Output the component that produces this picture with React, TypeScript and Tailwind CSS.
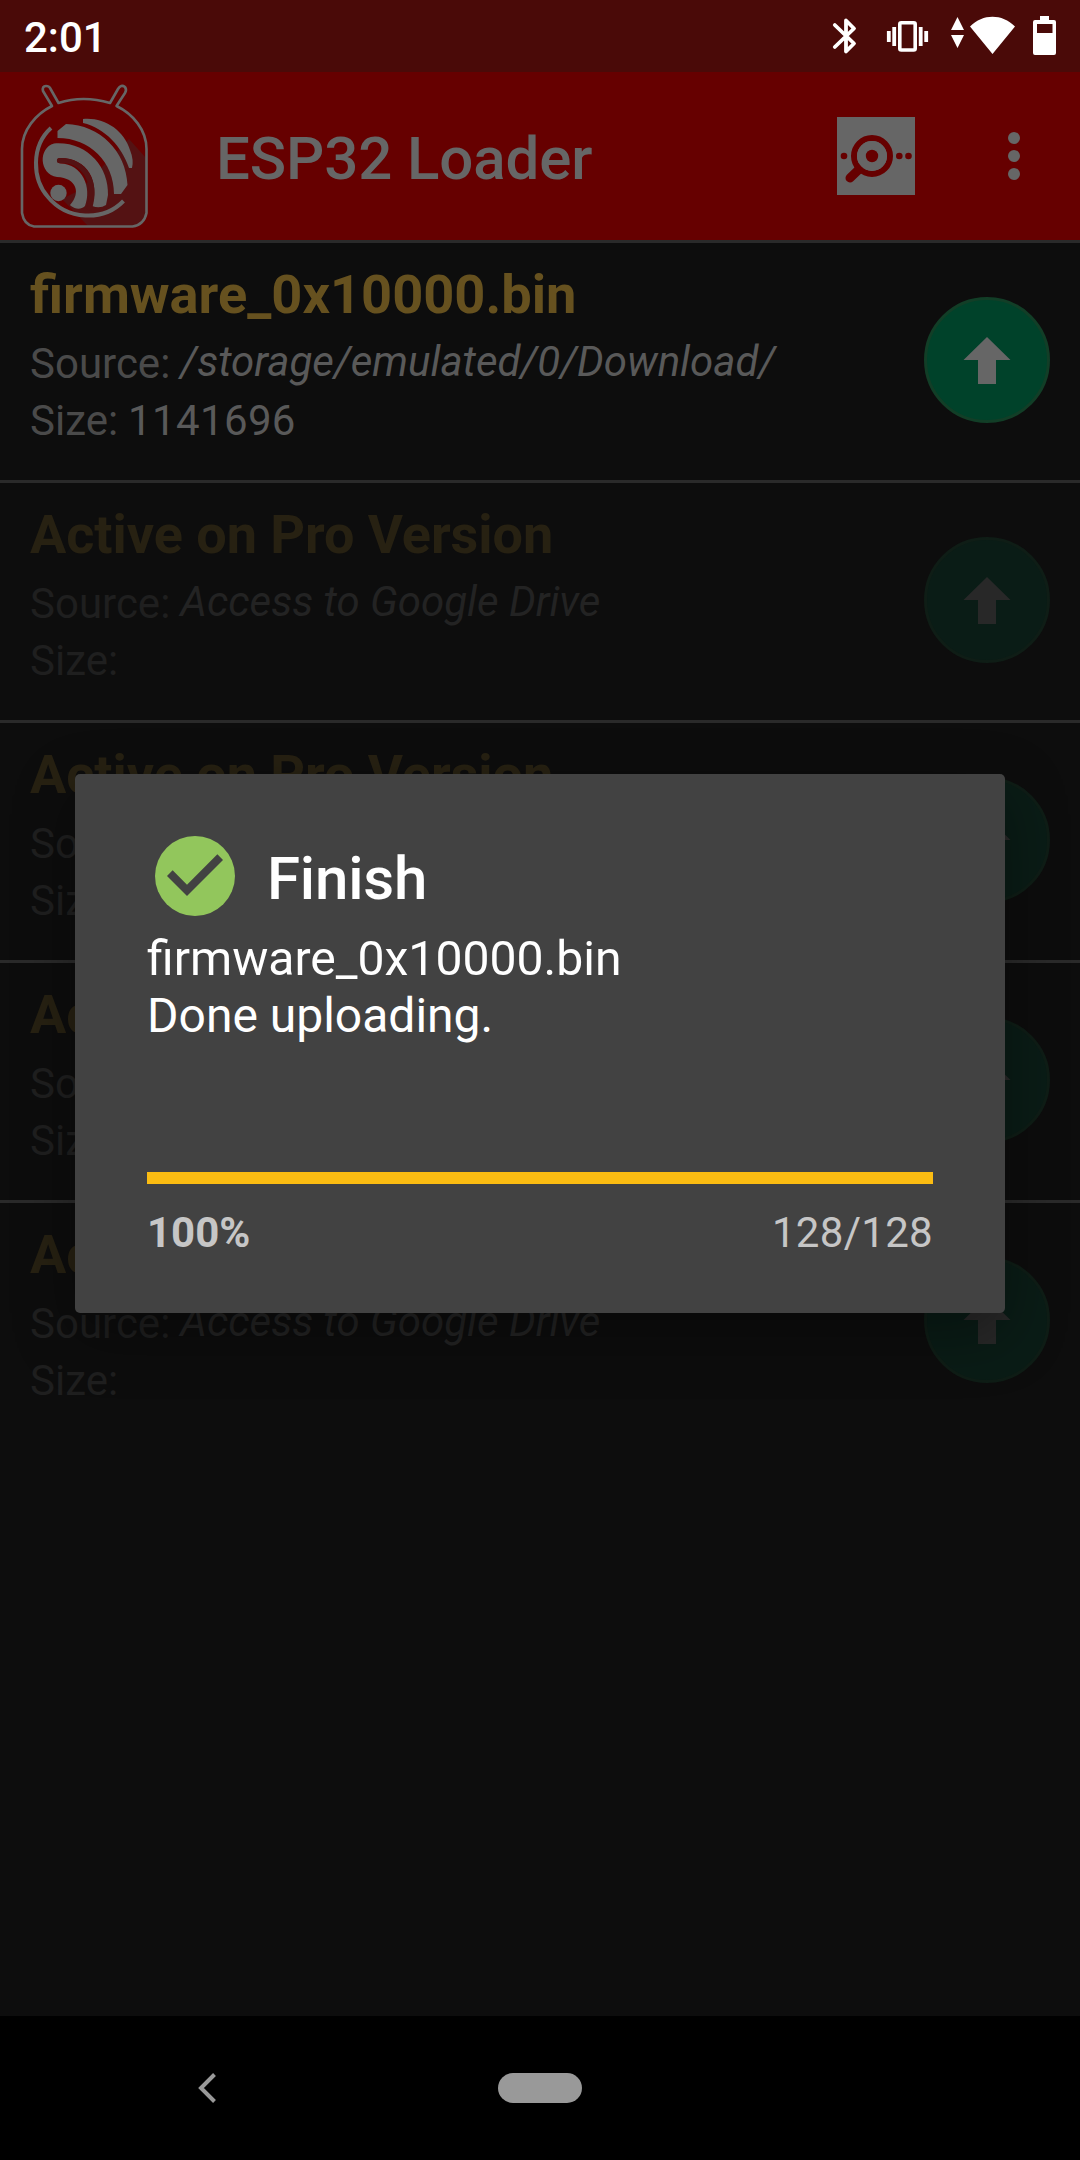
import React from "react";

function Logo() {
  return (
    <svg className="-mt-0.5 ml-4 h-[170px] w-[136px] shrink-0" viewBox="16 70 136 170" fill="none">
      <path d="M129 139 L146 158 V213 Q143 226 131 226 H88 L62 199 L80 190 Z" fill="#541213" />
      <g stroke="#666" strokeWidth="2.6">
        <path d="M58.500 103 Q83 95 110 103 L118 89 Q121 84 125 87 Q127 90 125 93 L116.500 106 C133 114 146.500 130 146.500 149 V213 Q144 225 132.500 226.500 H34 Q24 225 22 213 V149 C22 130 36 114 52 106 L43 91 Q42 86 46 86 Q49 86 50 88 Z" strokeLinejoin="round" />
        <path d="M51 128 C31 146 32 179 48 197 C67 220 103 222 123.500 201" stroke="#666" strokeWidth="4" />
      </g>
      <g fill="#666">
        <path d="M83 119 C104 117 124 130 130 150 Q134 160 132 168 L129 168 C122 147 105 128 83 123 Z" />
        <path d="M57.500 131 L66 124 C100 125 126 151 127.500 185 L121 194 H114 C114 162 90 138 57.500 138 Z" />
        <path d="M70 205 C81 193 77 178 57 177 C39 174 38 148 54 143.500 C87 141 109 167 108 195 L106 205 Q100 209 92 206 C100 182 88 158 60 158 C56 158 56 163 60 163.500 C83 164 92 188 85 206 C81 210 75 209 71 206 Z" />
        <circle cx="58.500" cy="193" r="8.200" />
      </g>
      <path d="M59.500 160.500 C86 160 97 184 89.500 208" stroke="#541213" strokeWidth="5.200" strokeLinecap="round" />
    </svg>
  );
}

function StatusBar() {
  return (
    <div className="flex h-[72px] shrink-0 items-center justify-between bg-[#4a0a08] pl-6 text-white">
      <span className="pt-[3px] text-[42px] font-medium leading-[72px]">2:01</span>
      <svg className="h-[72px] w-[280px]" viewBox="0 0 280 72" fill="none">
        <path d="M34.800 25 L54 43.500 L46 51.500 V20.500 L54 28.500 L34.800 47" stroke="#fff" strokeWidth="3.800" strokeLinecap="round" strokeLinejoin="round" />
        <rect x="99.800" y="22.800" width="15.400" height="27.200" rx="1.500" stroke="#fff" strokeWidth="3.600" />
        <path d="M88.800 31v11M94.200 27v19M120.700 27v19M126.200 31v11" stroke="#fff" strokeWidth="3.800" />
        <path d="M157.500 17l6.500 13h-13zM157.500 48l6.500-13h-13zM170 26.500C183 13.500 202 13.500 215 26.500L192.500 54z" fill="#fff" />
        <path fillRule="evenodd" d="M240 16h9v4h5a2 2 0 0 1 2 2v31a2 2 0 0 1-2 2h-19a2 2 0 0 1-2-2V22a2 2 0 0 1 2-2h5zM237 24v9h15.500v-9z" fill="#fff" />
      </svg>
    </div>
  );
}

function ScanIcon() {
  return (
    <svg className="h-[78px] w-[78px]" viewBox="0 0 78 78">
      <rect width="78" height="78" fill="#666" />
      <circle cx="35" cy="39" r="18" fill="none" stroke="#600" strokeWidth="6" />
      <path d="M25 49.500L13 61" stroke="#600" strokeWidth="9" strokeLinecap="round" />
      <circle cx="35" cy="39" r="15" fill="#666" />
      <g fill="#600">
        <circle cx="35" cy="39" r="6.200" />
        <circle cx="7" cy="39" r="3.300" />
        <circle cx="62.300" cy="39" r="3.300" />
        <circle cx="71.500" cy="39" r="3.300" />
      </g>
    </svg>
  );
}

function Toolbar() {
  return (
    <header className="flex h-[168px] shrink-0 items-center bg-[#660000] text-[#666]">
      <Logo />
      <h1 className="ml-[64px] grow pt-[5px] text-[60px] font-medium leading-[72px] tracking-[-0.1px]">ESP32 Loader</h1>
      <ScanIcon />
      <div className="ml-[93px] mr-[60px] flex flex-col gap-1.5">
        <span className="size-3 rounded-full bg-[#666]" />
        <span className="size-3 rounded-full bg-[#666]" />
        <span className="size-3 rounded-full bg-[#666]" />
      </div>
    </header>
  );
}

type Item = { name: string; source: string; size: string; active: boolean };

const locked: Item = { name: "Active on Pro Version", source: "Access to Google Drive", size: "", active: false };
const items: Item[] = [
  { name: "firmware_0x10000.bin", source: "/storage/emulated/0/Download/", size: "1141696", active: true },
  locked,
  locked,
  locked,
  locked,
];

function Row({ item }: { item: Item }) {
  const a = item.active;
  return (
    <li className="flex h-[240px] items-start justify-between border-t-[3px] border-[#2a2a2a] px-[30px]">
      <div className="pt-5">
        <h2 className={`font-bold leading-[64px] ${a ? "text-[54.2px] text-[#66511f]" : "text-[54px] tracking-[-0.05px] text-[#272112]"}`}>
          {item.name}
        </h2>
        <div className={`mt-2 flex text-[42px] leading-[57px] ${a ? "text-[#4a4a4a]" : "text-[#1f1f1f]"}`}>
          <span>Source:</span>
          <span className={`-mt-0.5 ml-[10px] italic ${a ? "text-[#595959]" : "text-[#232323]"}`}>{item.source}</span>
        </div>
        <div className={`flex text-[42px] leading-[57px] ${a ? "text-[#4a4a4a]" : "text-[#1f1f1f]"}`}>
          <span>Size:</span>
          <span className="ml-[10px] tracking-[0.35px] text-[#595959]">{item.size}</span>
        </div>
      </div>
      <div className={`mt-[54px] flex size-[126px] items-center justify-center rounded-full border-[3px] ${a ? "border-[#123e27] bg-[#00422a]" : "border-[#0f1d16] bg-[#0a1c16]"}`}>
        <svg className="h-[48px] w-[48px]" viewBox="0 0 48 48">
          <path d="M24 1L47.500 24H33V48H15V24H.5z" fill={a ? "#666666" : "#282828"} />
        </svg>
      </div>
    </li>
  );
}

function Dialog() {
  return (
    <div className="absolute left-[75px] top-[774px] flex h-[539px] w-[930px] flex-col rounded-[5px] bg-[#424242] px-[72px] text-white shadow-[0_20px_60px_rgba(0,0,0,0.35)]">
      <div className="mt-[54px] flex h-[96px] items-center">
        <svg className="size-[96px]" viewBox="0 0 24 24">
          <circle cx="12" cy="12" r="10" fill="#92c65c" />
          <path d="M10 17l-5-5 1.410-1.410L10 14.170l7.590-7.590L19 8l-9 9z" fill="#424242" />
        </svg>
        <span className="ml-6 mt-1.5 text-[60px] font-medium leading-[72px] tracking-[-0.2px]">Finish</span>
      </div>
      <p className="mt-[6px] text-[48px] leading-[57px]">
        <span className="text-[48.1px]">firmware_0x10000.bin</span>
        <br />
        Done uploading.
      </p>
      <div className="mt-[128px] h-3 w-full shrink-0 bg-[#fbbc12]" />
      <div className="mt-[20px] flex justify-between text-[42px] leading-[57px] text-[#c6c6c6]">
        <span className="font-bold">100%</span>
        <span className="tracking-[0.3px]">128/128</span>
      </div>
    </div>
  );
}

export default function App() {
  return (
    <div className="relative flex h-[2160px] w-[1080px] flex-col overflow-hidden bg-[#0d0d0d] font-['Roboto',sans-serif]">
      <StatusBar />
      <Toolbar />
      <ul className="grow">
        {items.map((item, i) => (
          <Row key={i} item={item} />
        ))}
      </ul>
      <nav className="flex h-[144px] shrink-0 items-center bg-black">
        <svg className="ml-[198px] h-[30px] w-[19px]" viewBox="0 0 19 30" fill="none">
          <path d="M16.500 1.500L3 15l13.500 13.500" stroke="#999" strokeWidth="4" />
        </svg>
        <span className="ml-[281px] h-[30px] w-[84px] rounded-full bg-[#999]" />
      </nav>
      <Dialog />
    </div>
  );
}
